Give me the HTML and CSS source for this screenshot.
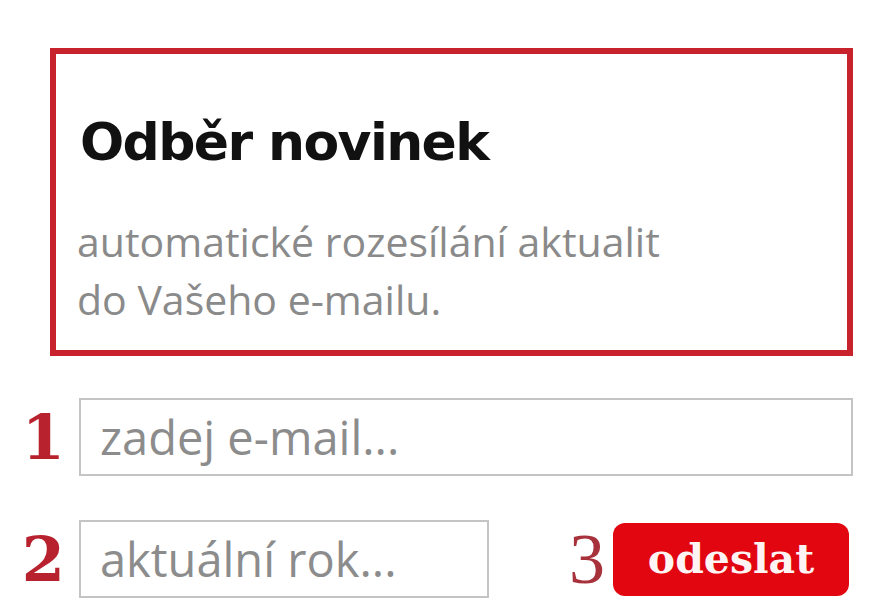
FILE: index.html
```html
<!DOCTYPE html>
<html lang="cs">
<head>
  <meta charset="UTF-8" />
  <meta name="viewport" content="width=device-width, initial-scale=1.0"/>
  <title>Odběr novinek</title>
  <link rel="stylesheet" href="styles.css">
</head>
<body>
  <div class="widget">
    <div class="info">
      <h2>Odběr novinek</h2>
      <p>automatické rozesílání aktualit<br>do Vašeho e-mailu.</p>
    </div>
    <form class="subscribe" onsubmit="return false">
      <div class="row">
        <span class="num">1</span>
        <input class="field email" type="text" placeholder="zadej e-mail...">
      </div>
      <div class="row">
        <span class="num">2</span>
        <input class="field year" type="text" placeholder="aktuální rok...">
        <span class="step">3</span>
        <button type="submit">odeslat</button>
      </div>
    </form>
  </div>
</body>
</html>
```

FILE: styles.css
```css
body {
  margin: 0;
  background: #fff;
  font-family: 'Open Sans', sans-serif;
}

.widget {
  width: 853px;
  padding-top: 48px;
}

.info {
  margin-left: 50px;
  height: 296px;
  border: 6px solid #c8232c;
  padding: 0 21px;
}

.info h2 {
  margin: 62px 0 0 3px;
  font-family: 'DejaVu Sans', sans-serif;
  font-weight: bold;
  font-size: 52px;
  line-height: 52px;
  letter-spacing: -1.6px;
  color: #111;
}

.info p {
  margin: 44px 0 0;
  font-size: 41px;
  line-height: 58px;
  color: #8a8a8a;
}

.subscribe {
  margin-top: 42px;
}

.row {
  display: flex;
  align-items: center;
  height: 78px;
  margin-bottom: 44px;
}

.row:last-child {
  margin-bottom: 0;
}

.num {
  width: 65px;
  padding-right: 14px;
  text-align: right;
  font-family: 'DejaVu Serif', serif;
  font-weight: bold;
  font-size: 62px;
  color: #b8222e;
}

.field {
  box-sizing: border-box;
  height: 78px;
  border: 2px solid #c4c4c4;
  padding: 0 19px;
  font-family: 'Open Sans', sans-serif;
  font-size: 47px;
  color: #666;
  outline: none;
}

.field::placeholder {
  color: #8c8c8c;
}

.email {
  flex: 1;
}

.year {
  width: 410px;
}

.step {
  margin-left: 80px;
  padding-right: 8px;
  font-family: 'Liberation Serif', serif;
  font-size: 72px;
  color: #a8323c;
}

button {
  width: 236px;
  height: 73px;
  border: none;
  border-radius: 12px;
  background: #e1060f;
  color: #fff4f4;
  font-family: 'DejaVu Serif', serif;
  font-weight: bold;
  font-size: 41px;
  cursor: pointer;
}
```
